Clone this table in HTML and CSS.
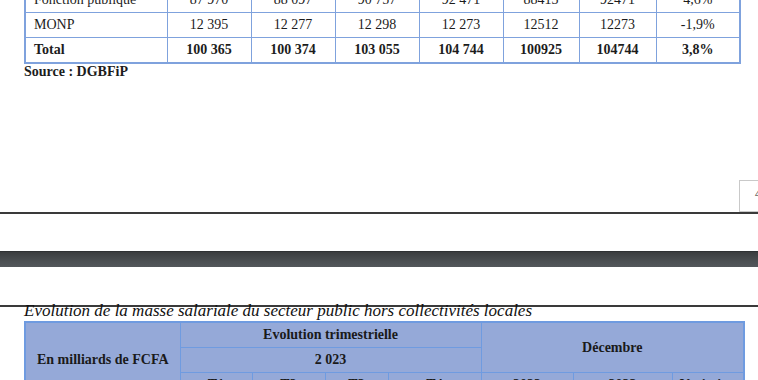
FILE: index.html
```html
<!DOCTYPE html>
<html lang="fr">
<head>
<meta charset="utf-8">
<link rel="stylesheet" href="styles.css">
</head>
<body>
<div class="viewer">
  <section class="page page-one">
    <table class="data">
      <colgroup>
        <col class="c-label"><col class="c84"><col class="c84"><col class="c84"><col class="c84"><col class="c76"><col class="c77"><col class="c84">
      </colgroup>
      <tr><td class="lbl">Fonction publique</td><td>87 970</td><td>88 097</td><td>90 757</td><td>92 471</td><td>88413</td><td>92471</td><td>4,6%</td></tr>
      <tr><td class="lbl">MONP</td><td>12 395</td><td>12 277</td><td>12 298</td><td>12 273</td><td>12512</td><td>12273</td><td>-1,9%</td></tr>
      <tr class="total"><td class="lbl">Total</td><td>100 365</td><td>100 374</td><td>103 055</td><td>104 744</td><td>100925</td><td>104744</td><td>3,8%</td></tr>
    </table>
    <p class="source">Source : DGBFiP</p>
    <div class="side-box"><span>4</span></div>
  </section>

  <div class="page-gap"></div>

  <section class="page page-two">
    <p class="title">Evolution de la masse salariale du secteur public hors collectivités locales</p>
    <table class="head">
      <colgroup>
        <col class="h-label"><col class="h72"><col class="h73"><col class="h63"><col class="h93"><col class="h92"><col class="h99"><col class="h72">
      </colgroup>
      <tr>
        <th rowspan="3" class="hl">En milliards de FCFA</th>
        <th colspan="4">Evolution trimestrielle</th>
        <th colspan="3" rowspan="2">Décembre</th>
      </tr>
      <tr><th colspan="4">2 023</th></tr>
      <tr><th>T1</th><th>T2</th><th>T3</th><th>T4</th><th>2022</th><th>2023</th><th>Variation</th></tr>
    </table>
  </section>
</div>
</body>
</html>
```

FILE: styles.css
```css
html, body {
  margin: 0;
  padding: 0;
  background: #ffffff;
}

body {
  width: 758px;
  height: 380px;
  overflow: hidden;
  font-family: "Liberation Serif", "Times New Roman", serif;
  color: #1c1c1c;
}

.viewer {
  width: 758px;
}

.page-one {
  display: flow-root;
  position: relative;
  height: 212px;
  border-bottom: 2px solid #3a3a3a;
  padding-left: 24px;
}

.data {
  margin-top: -14px;
  border-collapse: collapse;
  table-layout: fixed;
  width: 715px;
  border: 2px solid #7fa2dd;
  font-size: 14px;
}

.c-label { width: 142px; }
.c84 { width: 84px; }
.c76 { width: 76px; }
.c77 { width: 77px; }

.data td {
  height: 24px;
  padding: 0;
  border: 1px solid #7fa2dd;
  text-align: center;
  line-height: 24px;
}

.data td.lbl {
  text-align: left;
  padding-left: 8px;
}

.data .total td {
  font-weight: bold;
}

.source {
  margin: 0;
  font-size: 14px;
  font-weight: bold;
  line-height: 16px;
}

.side-box {
  position: absolute;
  left: 739px;
  top: 180px;
  width: 30px;
  height: 32px;
  border: 1px solid #c9c9c9;
  background: #ffffff;
  box-sizing: border-box;
  font-size: 11px;
  line-height: 14px;
  padding: 5px 0 0 15px;
}

.page-gap {
  margin-top: 37px;
  height: 16px;
  background: linear-gradient(#3b3d3f, #4b4f52 60%, #53575b);
  border-top: 1px solid #2f3133;
  box-sizing: border-box;
}

.page-two {
  margin-top: 38px;
  border-top: 2px solid #3a3a3a;
  padding-left: 24px;
}

.title {
  margin: -4px 0 0;
  font-style: italic;
  font-size: 17px;
  line-height: 16px;
  height: 16px;
  color: #111;
}

.head {
  margin-top: 2px;
  border-collapse: collapse;
  table-layout: fixed;
  width: 720px;
  background: #95a9d8;
  border: 2px solid #6f9be0;
  font-size: 14px;
}

.h-label { width: 155px; }
.h72 { width: 72px; }
.h73 { width: 73px; }
.h63 { width: 63px; }
.h93 { width: 93px; }
.h92 { width: 92px; }
.h99 { width: 99px; }

.head th {
  height: 24px;
  padding: 0;
  border: 1px solid #6f9be0;
  font-weight: bold;
  text-align: center;
  line-height: 24px;
  color: #1a1a1a;
}

.head th.hl {
  vertical-align: middle;
}
```
